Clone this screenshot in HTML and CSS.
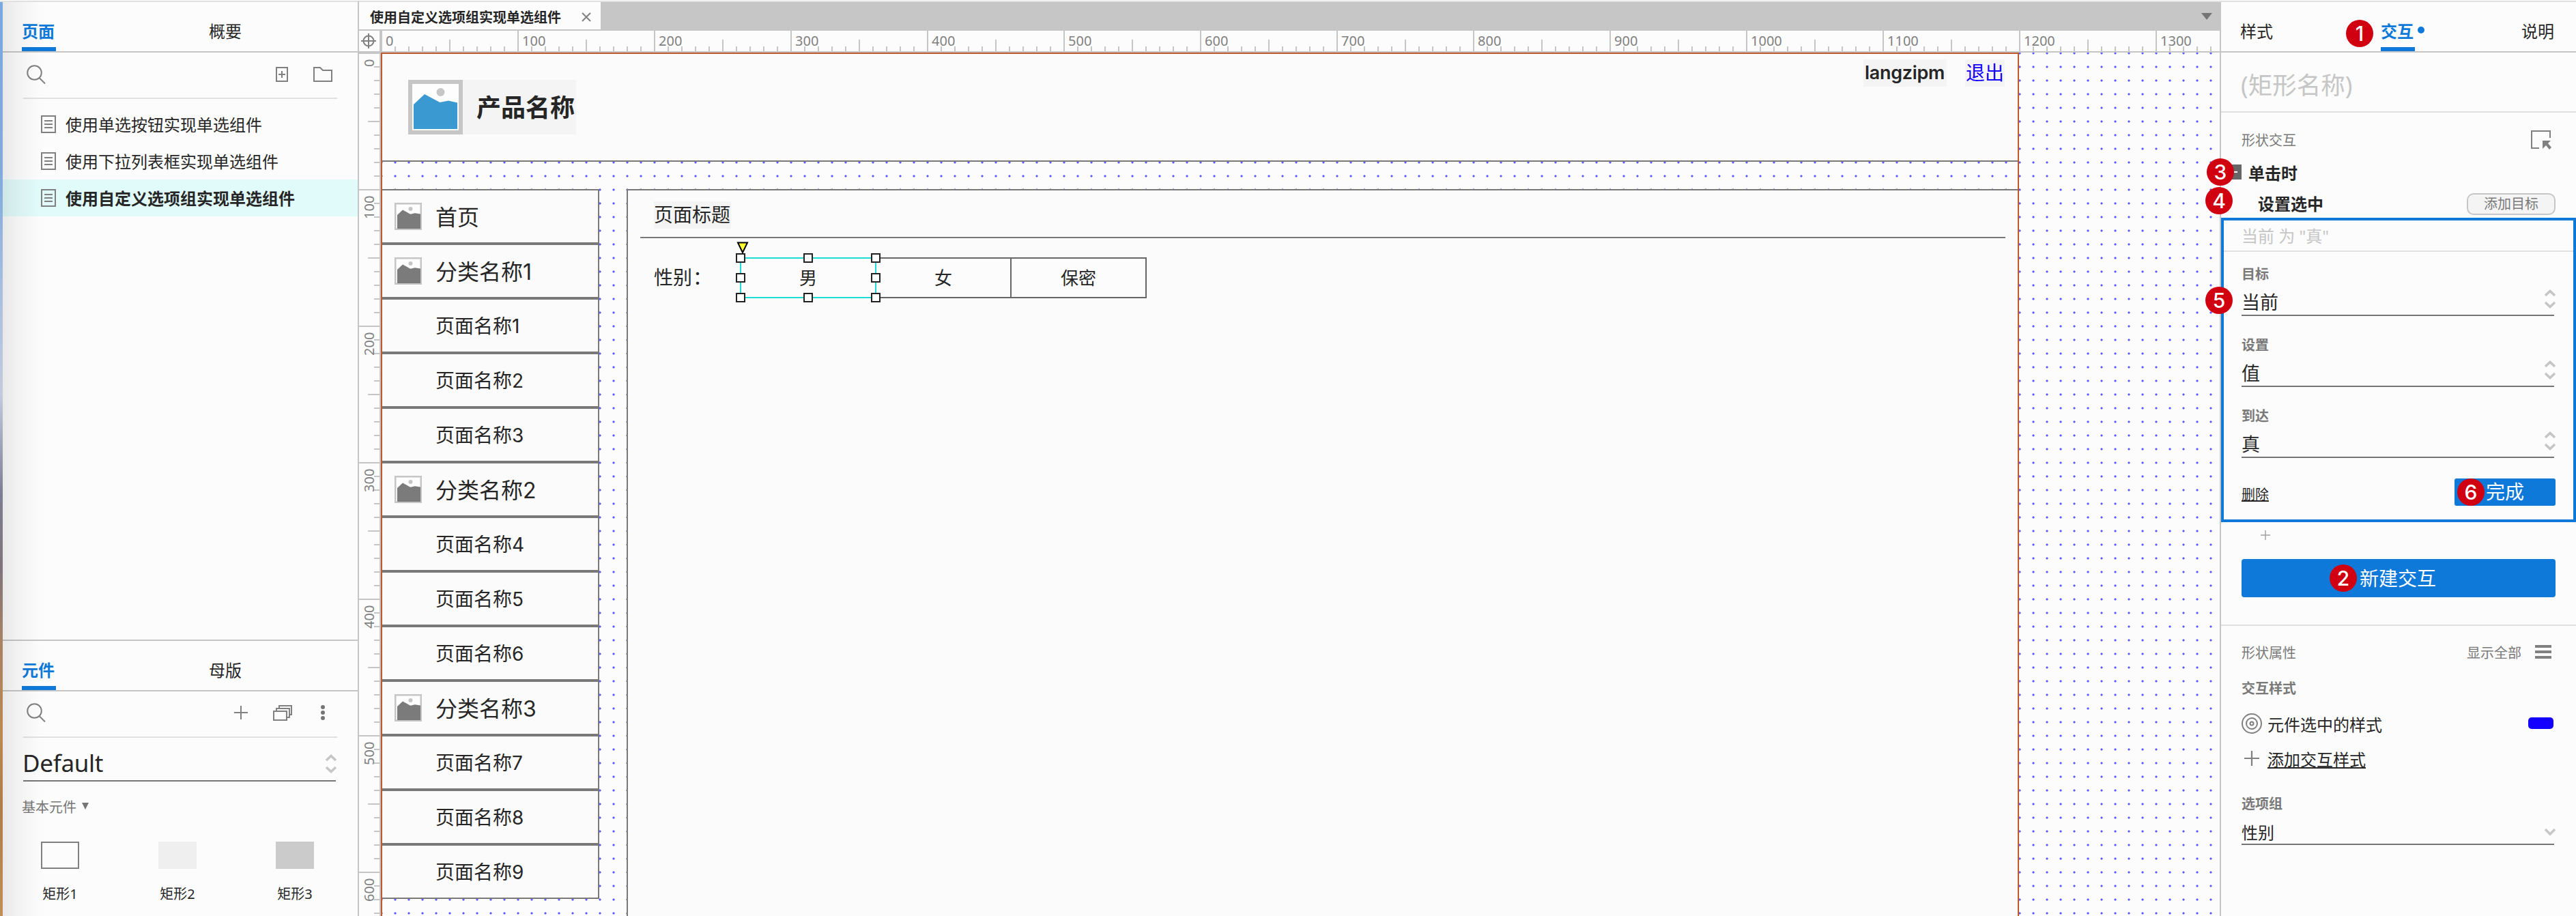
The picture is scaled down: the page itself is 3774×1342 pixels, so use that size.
FILE: index.html
```html
<!DOCTYPE html>
<html lang="zh-CN">
<head>
    <meta charset="UTF-8">
    <title>使用自定义选项组实现单选组件</title>
    <link rel="stylesheet" href="styles.css">
</head>
<body>
    <!-- 公用图标 -->
    <svg class="defs" width="0" height="0">
        <symbol id="i-search" viewBox="0 0 28 28"><circle cx="11.5" cy="11.5" r="10.3"/><path d="M19 19.5l8 8"/></symbol>
        <symbol id="i-plus" viewBox="0 0 20 20"><path d="M10 0v20M0 10h20"/></symbol>
        <symbol id="i-page" viewBox="0 0 22 26"><path d="M1 1h20v24H1zM5 8h12M5 13h12M5 18h12"/></symbol>
        <symbol id="i-updown" viewBox="0 0 18 28"><path d="M2 9l7-6.5L16 9M2 19l7 6.5L16 19"/></symbol>
        <symbol id="i-pic" viewBox="0 0 80 80">
            <path fill="#fdfdfd" stroke="#c6c6c6" stroke-width="5" d="M2.5 2.5h75v75h-75z"/>
            <circle cx="47" cy="18" r="6" fill="#c6c6c6"/>
            <path fill="currentColor" d="M8 36L24 21 46.500 33.500 60 30.500 76 33v43H8z"/>
        </symbol>
    </svg>

    <div class="app">
        <!-- 左侧：页面 / 元件 -->
        <aside class="left">
            <nav class="tabs">
                <span class="tab active">页面</span>
                <span class="tab">概要</span>
            </nav>
            <div class="toolbar">
                <svg class="icon search" width="28" height="28"><use href="#i-search"/></svg>
                <svg class="icon" width="18" height="22" viewBox="0 0 18 22"><path d="M1 1h16v20H1zM9 6v10M4 11h10"/></svg>
                <svg class="icon folder" width="28" height="22" viewBox="0 0 28 22"><path d="M1 1h9l4 4h13v16H1z"/></svg>
            </div>
            <ul class="pages">
                <li><svg class="icon" width="22" height="26"><use href="#i-page"/></svg>使用单选按钮实现单选组件</li>
                <li><svg class="icon" width="22" height="26"><use href="#i-page"/></svg>使用下拉列表框实现单选组件</li>
                <li class="current"><svg class="icon" width="22" height="26"><use href="#i-page"/></svg>使用自定义选项组实现单选组件</li>
            </ul>

            <nav class="tabs library-tabs">
                <span class="tab active">元件</span>
                <span class="tab">母版</span>
            </nav>
            <div class="toolbar library-tools">
                <svg class="icon search" width="28" height="28"><use href="#i-search"/></svg>
                <svg class="icon" width="20" height="20"><use href="#i-plus"/></svg>
                <svg class="icon stack" width="28" height="23" viewBox="0 0 28 23"><path d="M1 9h19v13H1zM5 9V5h19v13h-4M9 5V1h18v13h-3"/></svg>
                <svg class="dots" width="6" height="22" viewBox="0 0 6 22"><circle cx="3" cy="3" r="3"/><circle cx="3" cy="11" r="3"/><circle cx="3" cy="19" r="3"/></svg>
            </div>
            <div class="library">
                <span>Default</span>
                <svg class="caret" width="18" height="28"><use href="#i-updown"/></svg>
            </div>
            <div class="group">基本元件 <i class="tri"></i></div>
            <div class="shapes">
                <div class="shape"><i class="box outline"></i>矩形1</div>
                <div class="shape"><i class="box light"></i>矩形2</div>
                <div class="shape"><i class="box dark"></i>矩形3</div>
            </div>
        </aside>

        <!-- 画布 -->
        <main class="stage">
            <div class="filetabs">
                <div class="filetab">使用自定义选项组实现单选组件
                    <svg class="icon" width="14" height="14" viewBox="0 0 14 14"><path d="M1 1l12 12M13 1L1 13"/></svg>
                </div>
                <i class="tri big"></i>
            </div>
            <div class="ruler-row">
                <div class="corner"><svg class="icon" width="24" height="24" viewBox="0 0 24 24"><circle cx="12" cy="12" r="7.500"/><path d="M12 1v22M1 12h22"/></svg></div>
                <div class="ruler-x" id="rulerX"></div>
            </div>
            <div class="work">
                <div class="ruler-y" id="rulerY"></div>
                <div class="canvas">
                    <div class="widget header"></div>
                    <svg class="widget logo" width="80" height="80" viewBox="0 0 80 80">
                        <path fill="#fdfdfd" stroke="#c6c6c6" stroke-width="6" d="M3 3h74v74H3z"/>
                        <circle cx="47.500" cy="18" r="6" fill="#c6c6c6"/>
                        <path fill="#3b99d2" d="M8 36L24 21 46.500 33 59 30.500 72 33.500V72H8z"/>
                    </svg>
                    <div class="widget product">产品名称</div>
                    <div class="widget user">langzipm</div>
                    <div class="widget logout">退出</div>

                    <div class="widget menu" id="menu"></div>

                    <div class="widget content"></div>
                    <div class="widget title">页面标题</div>
                    <div class="widget rule"></div>
                    <div class="widget label">性别<span class="colon">：</span></div>
                    <div class="widget options">
                        <div class="option">男</div>
                        <div class="option">女</div>
                        <div class="option">保密</div>
                    </div>
                    <div class="widget selection">
                        <i></i><i></i><i></i>
                        <i></i><b></b><i></i>
                        <i></i><i></i><i></i>
                    </div>
                    <svg class="widget marker" width="18" height="18" viewBox="0 0 18 18"><path d="M2 1.500h14L9 16z"/></svg>
                    <div class="widget frame"></div>
                </div>
            </div>
        </main>

        <!-- 右侧：交互 -->
        <aside class="right">
            <nav class="tabs">
                <span class="tab">样式</span>
                <span class="tab active">交互<i class="dot"></i><em class="badge b1">1</em></span>
                <span class="tab">说明</span>
            </nav>
            <div class="name">(矩形名称)</div>
            <div class="row head">
                <span>形状交互</span>
                <svg class="icon" width="30" height="28" viewBox="0 0 30 28"><path d="M28 11V1H1v25h11"/><path class="solid" d="M17 15h12l-4 4 5 6-3 3-5-6-5 5z"/></svg>
            </div>
            <div class="row event"><i class="toggle"></i>单击时<em class="badge b3">3</em></div>
            <div class="row action">
                <strong>设置选中</strong>
                <span class="add">添加目标</span>
                <em class="badge b4">4</em>
            </div>
            <section class="editor">
                <div class="summary">当前 为 "真"</div>
                <label>目标</label>
                <div class="select">当前<svg class="caret" width="18" height="28"><use href="#i-updown"/></svg><em class="badge b5">5</em></div>
                <label>设置</label>
                <div class="select">值<svg class="caret" width="18" height="28"><use href="#i-updown"/></svg></div>
                <label>到达</label>
                <div class="select">真<svg class="caret" width="18" height="28"><use href="#i-updown"/></svg></div>
                <div class="foot">
                    <a class="remove">删除</a>
                    <span class="done"><em class="badge b6">6</em>完成</span>
                </div>
            </section>
            <svg class="icon more" width="14" height="14"><use href="#i-plus"/></svg>
            <div class="create"><em class="badge b2">2</em>新建交互</div>

            <section class="props">
                <div class="row props-head">
                    <span>形状属性</span>
                    <span class="all">显示全部</span>
                    <i class="burger"></i>
                </div>
                <div class="sub">交互样式</div>
                <div class="row style">
                    <svg class="icon" width="30" height="30" viewBox="0 0 30 30"><circle cx="15" cy="15" r="14"/><circle cx="15" cy="15" r="8"/><circle cx="15" cy="15" r="2.500"/></svg>
                    <span>元件选中的样式</span>
                    <i class="swatch"></i>
                </div>
                <div class="row style add-style">
                    <svg class="icon" width="22" height="22"><use href="#i-plus"/></svg>
                    <a>添加交互样式</a>
                </div>
                <div class="sub optgroup">选项组</div>
                <div class="select small">性别
                    <svg class="caret" width="18" height="12" viewBox="0 0 18 12"><path d="M2 2l7 7 7-7"/></svg>
                </div>
            </section>
        </aside>
    </div>

    <script>
        // 标尺刻度
        function addLabels(id, max) {
            const ruler = document.getElementById(id);
            for (let n = 0; n <= max; n += 100) {
                const label = document.createElement('span');
                label.textContent = n;
                ruler.appendChild(label);
            }
        }
        addLabels('rulerX', 1300);
        addLabels('rulerY', 600);

        // 左侧菜单
        const items = ['首页', '分类名称1', '页面名称1', '页面名称2', '页面名称3', '分类名称2', '页面名称4',
            '页面名称5', '页面名称6', '分类名称3', '页面名称7', '页面名称8', '页面名称9'];
        const menu = document.getElementById('menu');
        items.forEach(text => {
            const item = document.createElement('div');
            item.className = 'item';
            if (!text.startsWith('页面')) {
                item.classList.add('top');
                item.innerHTML = '<svg width="40" height="40"><use href="#i-pic"/></svg>';
            }
            const name = document.createElement('span');
            name.textContent = text;
            item.appendChild(name);
            menu.appendChild(item);
        });
    </script>
</body>
</html>
```
FILE: styles.css
```css
* {
    box-sizing: border-box;
}
body {
    margin: 0;
    background: #fcfcfc;
    color: #262626;
    font-family: "Noto Sans", "Noto Sans CJK SC", sans-serif;
    font-size: 24px;
    overflow: hidden;
}
.defs {
    position: absolute;
}
i, em {
    font-style: normal;
}
.app {
    display: grid;
    grid-template-columns: 526px 2728px 520px;
    height: 1342px;
    padding-top: 1px;
}
.left, .stage, .right {
    border-top: 2px solid #e0e0e0;
    min-width: 0;
    height: 1341px;
}
.left, .stage {
    overflow: hidden;
}
.icon {
    fill: none;
    stroke: #808080;
    stroke-width: 2;
    flex: none;
}
.caret {
    fill: none;
    stroke: #c6c6c6;
    stroke-width: 3.5;
    flex: none;
}

/* tabs */
.tabs {
    display: flex;
    height: 74px;
    border-bottom: 2px solid #c6c6c6;
    line-height: 86px;
}
.tab.active {
    position: relative;
    width: 50px;
    color: #0f79d9;
    font-weight: bold;
    border-bottom: 6px solid #0f79d9;
    white-space: nowrap;
}

/* left */
.left {
    display: flex;
    flex-direction: column;
    position: relative;
    border-right: 2px solid #c6c6c6;
    padding-left: 4px;
    background: #fcfcfc;
}
.left::before {
    content: "";
    position: absolute;
    left: 0;
    top: -2px;
    bottom: 0;
    width: 4px;
    background: linear-gradient(#78a9e0, #84abdc 20%, #a9bfe0 32%, #c3cbdd 43%, #7d7d92 54%, #80747c 62%, #a98263 70%, #bd8852 80%, #b07c4c 88%, #c28d57);
}
.left::after {
    content: "";
    position: absolute;
    left: 4px;
    top: -2px;
    bottom: 0;
    width: 56px;
    background: linear-gradient(90deg, rgba(0, 0, 0, 0.08), rgba(0, 0, 0, 0.04) 40%, transparent);
}
.left .tabs {
    padding-left: 28px;
}
.left .tab + .tab {
    margin-left: 224px;
}
.toolbar {
    display: flex;
    align-items: center;
    width: 460px;
    height: 68px;
    margin-left: 30px;
    padding: 0 7px 2px 5px;
    border-bottom: 2px solid #e0e0e0;
}
.toolbar .search {
    margin-right: auto;
}
.folder {
    margin-left: 37px;
}
.pages {
    list-style: none;
    margin: 10px 0 0;
    padding: 0;
    flex: none;
    height: 782px;
}
.pages li {
    display: flex;
    align-items: center;
    gap: 14px;
    height: 54px;
    padding: 0 0 2px 56px;
}
.pages .icon {
    margin-top: 2px;
}
.pages .current {
    background: #e1fafa;
    font-weight: bold;
}
.library-tabs {
    height: 76px;
    border-top: 2px solid #c6c6c6;
    flex: none;
}
.library-tools {
    padding: 0 18px 4px 5px;
}
.stack {
    margin: 0 42px 0 37px;
}
.dots {
    fill: #757575;
}
.library {
    display: flex;
    justify-content: space-between;
    align-items: center;
    width: 458px;
    height: 64px;
    margin-left: 30px;
    border-bottom: 2px solid #757575;
    font-size: 35px;
}
.library .caret {
    margin-right: -2px;
    margin-top: 14px;
}
.library span {
    padding-top: 11px;
    margin-left: -1px;
    letter-spacing: -0.3px;
}
.group {
    display: flex;
    align-items: center;
    gap: 8px;
    height: 72px;
    margin-left: 28px;
    color: #757575;
    font-size: 20px;
}
.tri {
    border: 5px solid transparent;
    border-top: 10px solid #757575;
    border-bottom: 0;
}
.tri.big {
    border-width: 10px 8.5px 0;
}
.shapes {
    display: flex;
    margin-left: 56px;
    padding-top: 16px;
    gap: 116px;
}
.shape {
    width: 56px;
    font-size: 20px;
    line-height: 28px;
    text-align: center;
    white-space: nowrap;
}
.box {
    display: block;
    height: 40px;
    margin-bottom: 23px;
}
.outline {
    border: 2px solid #808080;
}
.light {
    background: #efefef;
}
.dark {
    background: #cbcbcb;
}

/* stage */
.stage {
    display: flex;
    flex-direction: column;
}
.filetabs {
    display: flex;
    align-items: center;
    justify-content: space-between;
    flex: none;
    height: 42px;
    padding-right: 13px;
    background: #c6c6c6;
}
.filetab {
    display: flex;
    align-items: center;
    justify-content: space-between;
    align-self: flex-start;
    width: 354px;
    height: 40px;
    padding: 3px 14px 0 16px;
    background: #fcfcfc;
    font-size: 20px;
    font-weight: bold;
}
.ruler-row {
    display: flex;
    flex: none;
    height: 32px;
    border-bottom: 2px solid #c6c6c6;
    border-right: 2px solid #c6c6c6;
}
.corner {
    flex: none;
    width: 32px;
    padding: 3px 2px;
    border-right: 2px solid #c6c6c6;
}
.corner .icon {
    display: block;
}
.ruler-x, .ruler-y {
    color: #808080;
    font-size: 20px;
    overflow: hidden;
}
.ruler-x {
    display: flex;
    flex: 1;
    background:
        linear-gradient(90deg, #c6c6c6 2px, transparent 2px) 0 100% / 20px 7px repeat-x,
        linear-gradient(90deg, #c6c6c6 2px, transparent 2px) 0 100% / 100px 17px repeat-x,
        linear-gradient(90deg, #c6c6c6 2px, transparent 2px) 0 0 / 200px 100% repeat-x;
}
.ruler-x span {
    flex: none;
    width: 200px;
    padding-left: 7px;
    line-height: 29px;
}
.work {
    display: flex;
    flex: 1;
    min-height: 0;
    border-right: 2px solid #c6c6c6;
}
.ruler-y {
    flex: none;
    width: 32px;
    border-right: 2px solid #c6c6c6;
    background:
        linear-gradient(#c6c6c6 2px, transparent 2px) 100% 0 / 8px 20px repeat-y,
        linear-gradient(#c6c6c6 2px, transparent 2px) 100% 0 / 17px 100px repeat-y,
        linear-gradient(#c6c6c6 2px, transparent 2px) 0 0 / 100% 200px repeat-y;
}
.ruler-y span {
    display: block;
    width: 30px;
    height: 200px;
    padding-bottom: 10px;
    line-height: 30px;
    writing-mode: vertical-rl;
    transform: rotate(180deg);
    text-align: right;
}
.canvas {
    position: relative;
    flex: 1;
    overflow: hidden;
    background: radial-gradient(circle at 11px 11px, #5c5cff 1.2px, transparent 2px) -10px -10px / 20px 20px;
    font-family: Inter, "Noto Sans CJK SC", sans-serif;
}

/* 画布上的元件 */
.widget {
    position: absolute;
}
.header {
    left: 0;
    top: 0;
    width: 2400px;
    height: 160px;
    background: #fbfbfb;
    border: 2px solid #797979;
}
.logo {
    left: 40px;
    top: 40px;
}
.product {
    left: 120px;
    top: 40px;
    width: 166px;
    height: 80px;
    padding-left: 20px;
    background: #f4f4f4;
    font-size: 36px;
    font-weight: bold;
    line-height: 82px;
}
.user, .logout, .title {
    height: 40px;
    background: #f4f4f4;
    font-size: 28px;
    line-height: 40px;
    white-space: nowrap;
}
.user {
    left: 2172px;
    top: 10px;
    width: 122px;
    padding-left: 2px;
    font-weight: 600;
    font-size: 27px;
    letter-spacing: -0.3px;
}
.logout {
    left: 2321px;
    top: 10px;
    width: 58px;
    padding-left: 1px;
    color: #1400ff;
}
.menu {
    left: 0;
    top: 200px;
    width: 320px;
}
.item {
    display: flex;
    align-items: center;
    height: 80px;
    padding-left: 78px;
    border: 2px solid #797979;
    background: #fbfbfb;
    font-size: 28px;
}
.item span {
    padding-bottom: 2px;
}
.item.top {
    padding-left: 18px;
    font-size: 32px;
}
.item svg {
    margin-right: 20px;
    color: #7b7b7b;
}
.content {
    left: 360px;
    top: 200px;
    width: 2040px;
    height: 1200px;
    background: #fbfbfb;
    border: 2px solid #797979;
}
.title {
    left: 400px;
    top: 218px;
    width: 113px;
}
.rule {
    left: 380px;
    top: 270px;
    width: 2000px;
    height: 2px;
    background: #797979;
}
.label {
    left: 400px;
    top: 310px;
    font-size: 28px;
    line-height: 40px;
    white-space: nowrap;
}
.colon {
    margin-left: 1px;
}
.options {
    display: flex;
    left: 526px;
    top: 300px;
}
.option {
    width: 200px;
    height: 60px;
    border: 2px solid #666;
    background: #fcfcfc;
    font-size: 26px;
    line-height: 57px;
    text-align: center;
}
.option + .option {
    margin-left: -2px;
}
.selection {
    display: grid;
    grid-template-columns: repeat(3, 14px);
    grid-template-rows: repeat(3, 14px);
    justify-content: space-between;
    align-content: space-between;
    left: 520px;
    top: 294px;
    width: 212px;
    height: 72px;
}
.selection::before {
    content: "";
    position: absolute;
    inset: 6px;
    border: 2px solid #1ddcd6;
}
.selection i {
    position: relative;
    background: #fff;
    border: 2px solid #222;
}
.marker {
    left: 521px;
    top: 277px;
    fill: #ffff30;
    stroke: #000;
    stroke-width: 2;
}
.frame {
    left: 0;
    top: 0;
    width: 2400px;
    height: 1400px;
    border: 2px solid #c05a2c;
}

/* right */
.right {
    position: relative;
}
.right .tabs {
    justify-content: space-between;
    padding: 0 32px 0 28px;
}
.right .tab.active {
    margin-left: 2px;
}
.dot {
    position: absolute;
    left: 54px;
    top: 36px;
    width: 10px;
    height: 10px;
    border-radius: 50%;
    background: #0f79d9;
}
.badge {
    position: absolute;
    width: 40px;
    height: 40px;
    border-radius: 50%;
    background: #d10011;
    color: #fff;
    font: 500 30px/40px Inter, sans-serif;
    text-align: center;
}
.b1 {
    left: -51px;
    top: 26px;
}
.b2 {
    left: 129px;
    top: 8px;
}
.b3 {
    left: -21px;
    top: -4px;
}
.b4 {
    left: -23px;
    top: -9px;
}
.b5 {
    left: -53px;
    top: 1px;
}
.b6 {
    left: 4px;
    top: 0;
}
.name {
    height: 88px;
    padding-left: 29px;
    border-bottom: 2px solid #e0e0e0;
    color: #c6c6c6;
    font-size: 35.5px;
    line-height: 94px;
}
.row {
    display: flex;
    align-items: center;
    position: relative;
}
.head {
    height: 73px;
    justify-content: space-between;
    padding: 6px 36px 0 30px;
    color: #797979;
    font-size: 20px;
}
.solid {
    fill: #808080;
    stroke: none;
}
.event {
    height: 32px;
    margin-top: -2px;
    font-weight: bold;
}
.toggle {
    display: flex;
    align-items: center;
    width: 22px;
    height: 22px;
    margin: -1px 10px 0 8px;
    background: #666;
}
.toggle::after {
    content: "";
    width: 12px;
    height: 2px;
    margin-left: 4px;
    background: #fff;
}
.action {
    height: 32px;
    margin-top: 15px;
    padding: 0 30px 0 54px;
    justify-content: space-between;
}
.action strong {
    padding-bottom: 3px;
}
.add {
    width: 130px;
    height: 32px;
    border: 2px solid #c6c6c6;
    border-radius: 10px;
    background: #f4f4f4;
    color: #797979;
    font-size: 20px;
    line-height: 28px;
    text-align: center;
}
.editor {
    height: 446px;
    margin-top: 4px;
    border: 4px solid #0f79d9;
}
.summary {
    height: 46px;
    margin-bottom: 18px;
    padding-left: 26px;
    border-bottom: 2px solid #e0e0e0;
    color: #c6c6c6;
    line-height: 46px;
}
label, .sub {
    display: block;
    height: 32px;
    margin-left: 26px;
    color: #797979;
    font-size: 20px;
    font-weight: bold;
    line-height: 30px;
}
.select {
    display: flex;
    align-items: center;
    justify-content: space-between;
    position: relative;
    width: 458px;
    height: 44px;
    margin: 0 0 28px 26px;
    padding-top: 2px;
    border-bottom: 2px solid #757575;
    font-size: 27px;
}
.select .caret {
    margin-right: -3px;
    margin-top: -6px;
}
.foot {
    display: flex;
    justify-content: space-between;
    margin: 30px 26px 0;
    white-space: nowrap;
}
.remove {
    padding-top: 8px;
    font-size: 20px;
    text-decoration: underline;
}
.done {
    position: relative;
    width: 148px;
    height: 40px;
    padding-left: 46px;
    border-radius: 3px;
    background: #0f79d9;
    color: #fff;
    font-size: 28px;
    line-height: 39px;
}
.more {
    display: block;
    margin: 12px 0 0 58px;
    stroke: #a0a0a0;
}
.create {
    position: relative;
    width: 460px;
    height: 56px;
    margin: 28px 0 40px 30px;
    padding-right: 2px;
    border-radius: 4px;
    background: #0f79d9;
    color: #fff;
    font-size: 28px;
    line-height: 56px;
    text-align: center;
}
.props {
    border-top: 2px solid #e0e0e0;
    padding-top: 22px;
}
.props-head {
    height: 32px;
    padding: 0 36px 0 30px;
    color: #797979;
    font-size: 20px;
}
.all {
    margin: 0 20px 0 auto;
}
.burger {
    width: 24px;
    height: 20px;
    border: solid #808080;
    border-width: 4px 0;
    background: linear-gradient(#808080, #808080) 0 4px / 100% 4px no-repeat;
}
.sub {
    margin: 23px 0 0 30px;
}
.style {
    height: 52px;
    margin-top: 8px;
    padding: 0 33px 0 30px;
    gap: 8px;
}
.swatch {
    width: 37px;
    height: 17px;
    margin: -2px 0 0 auto;
    border-radius: 5px;
    background: #1400ff;
}
.add-style {
    margin-top: 0;
    padding: 0 0 2px 34px;
    gap: 12px;
}
.add-style a {
    text-decoration: underline;
}
.optgroup {
    margin-top: 25px;
}
.small {
    height: 43px;
    margin-left: 30px;
    padding-top: 6px;
    font-size: 24px;
}
.small .caret {
    margin-top: 0;
}
```
